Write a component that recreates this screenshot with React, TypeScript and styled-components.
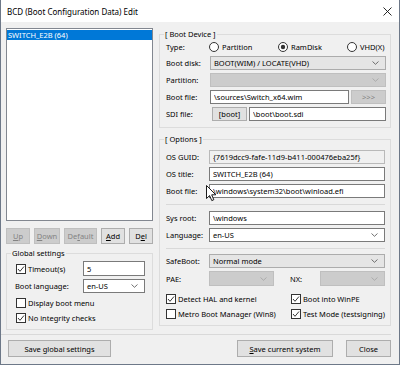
import React from "react"
import styled, { createGlobalStyle, css } from "styled-components"

const GlobalStyle = createGlobalStyle`
  html, body { margin: 0; padding: 0; background: #fff; }
  body {
    font-family: "Noto Sans", "DejaVu Sans", sans-serif;
    font-size: 7.5px;
    color: #000;
  }
  * { box-sizing: border-box; }
`

const Window = styled.div`
  position: relative;
  width: 400px;
  height: 365px;
  background: #f0f0f0;
  border: 1px solid #6d7888;
  border-top: none;
  display: flex;
  flex-direction: column;
  overflow: hidden;
`

const TitleBar = styled.div`
  flex: none;
  height: 22px;
  background: #fff;
  display: flex;
  align-items: center;
  justify-content: space-between;
  padding: 0 7px 0 6px;
`

const Title = styled.span`
  font-size: 8px;
`

const Main = styled.div`
  flex: none;
  height: 312px;
  display: flex;
  gap: 6px;
  padding: 6px 8px 0 5px;
`

const LeftCol = styled.div`
  width: 147px;
  display: flex;
  flex-direction: column;
`

const RightCol = styled.div`
  width: 232px;
  display: flex;
  flex-direction: column;
  padding-top: 1px;
`

const ListBox = styled.div`
  height: 193px;
  background: #fff;
  border: 1px solid #828790;
  padding: 1px 0 0 0;
`

const ListItem = styled.div<{ $selected?: boolean }>`
  height: 10px;
  line-height: 10px;
  padding-left: 1px;
  ${p => p.$selected && css`
    background: #0078d7;
    color: #fff;
  `}
`

const ButtonRow = styled.div`
  display: flex;
  gap: 4px;
  margin-top: 7px;
`

const Button = styled.button<{ $w: number; $h?: number }>`
  width: ${p => p.$w}px;
  height: ${p => p.$h ?? 16}px;
  margin: 0;
  padding: 0;
  font: inherit;
  color: #000;
  background: #e1e1e1;
  border: 1px solid #adadad;
  display: flex;
  align-items: center;
  justify-content: center;
  &:disabled {
    background: #cccccc;
    border-color: #bfbfbf;
    color: #838383;
  }
`

const Key = styled.u`
  text-decoration-thickness: 1px;
  text-underline-offset: 1px;
`

const Group = styled.fieldset<{ $mt?: number }>`
  margin: ${p => p.$mt ?? 0}px 0 0 0;
  padding: 0;
  border: 1px solid #dcdcdc;
  min-width: 0;
`

const Legend = styled.legend`
  margin-left: 4px;
  padding: 0 1px;
  height: 10px;
  line-height: 10px;
`

const GroupBody = styled.div<{ $pad: string }>`
  padding: ${p => p.$pad};
  display: flex;
  flex-direction: column;
  gap: 3px;
`

const Row = styled.div<{ $h?: number; $mt?: number }>`
  height: ${p => p.$h ?? 14}px;
  margin-top: ${p => p.$mt ?? 0}px;
  display: flex;
  align-items: center;
`

const Label = styled.span<{ $w: number }>`
  flex: none;
  width: ${p => p.$w}px;
  white-space: nowrap;
`

const Field = styled.input<{ $gray?: boolean }>`
  flex: 1;
  min-width: 0;
  height: 100%;
  margin: 0;
  padding: 0 3px;
  font: inherit;
  color: #000;
  background: ${p => (p.$gray ? "#f0f0f0" : "#fff")};
  border: 1px solid ${p => (p.$gray ? "#b9b9b9" : "#7a7a7a")};
  outline: none;
`

type Variant = "combo" | "edit" | "disabled"

const SelectBox = styled.div<{ $variant: Variant; $w?: number }>`
  ${p => (p.$w ? css`width: ${p.$w}px; flex: none;` : css`flex: 1;`)}
  height: 100%;
  display: flex;
  align-items: center;
  justify-content: space-between;
  padding: 0 6px 0 3px;
  white-space: nowrap;
  ${p => p.$variant === "combo" && css`
    background: #e5e5e5;
    border: 1px solid #acacac;
  `}
  ${p => p.$variant === "edit" && css`
    background: #fff;
    border: 1px solid #7a7a7a;
  `}
  ${p => p.$variant === "disabled" && css`
    background: #cccccc;
    border: 1px solid #bfbfbf;
    color: #838383;
  `}
`

const Chevron = ({ light }: { light?: boolean }) => (
  <svg width="7" height="4" viewBox="0 0 7 4">
    <polyline points="0.5,0.5 3.5,3.3 6.5,0.5" fill="none" stroke={light ? "#a8a8a8" : "#606060"} strokeWidth="0.9" />
  </svg>
)

function Select({ value, variant, w }: { value?: string; variant: Variant; w?: number }) {
  return (
    <SelectBox $variant={variant} $w={w}>
      <span>{value}</span>
      <Chevron light={variant === "disabled"} />
    </SelectBox>
  )
}

const CheckWrap = styled.label<{ $w?: number }>`
  display: flex;
  align-items: center;
  gap: 2px;
  white-space: nowrap;
  ${p => p.$w && css`width: ${p.$w}px; flex: none;`}
`

function Check({ checked, children, w }: { checked?: boolean; children: React.ReactNode; w?: number }) {
  return (
    <CheckWrap $w={w}>
      <svg width="10" height="10" viewBox="0 0 10 10">
        <rect x="0.5" y="0.5" width="9" height="9" fill="#fff" stroke="#333" />
        {checked && <polyline points="2,5 4,7.3 8,2.5" fill="none" stroke="#222" strokeWidth="0.9" />}
      </svg>
      <span>{children}</span>
    </CheckWrap>
  )
}

const RadioWrap = styled.label`
  width: 69px;
  flex: none;
  display: flex;
  align-items: center;
  gap: 3px;
`

function Radio({ checked, children }: { checked?: boolean; children: React.ReactNode }) {
  return (
    <RadioWrap>
      <svg width="10" height="10" viewBox="0 0 10 10">
        <circle cx="5" cy="5" r="4.5" fill="#fff" stroke="#333" />
        {checked && <circle cx="5" cy="5" r="2.2" fill="#333" />}
      </svg>
      <span>{children}</span>
    </RadioWrap>
  )
}

const Divider = styled.div<{ $mt: number; $mb: number }>`
  height: 1px;
  background: #d9d9d9;
  margin: ${p => p.$mt}px 0 ${p => p.$mb}px 0;
`

const FooterLine = styled.div`
  height: 1px;
  background: #d9d9d9;
  margin-right: 8px;
`

const Footer = styled.div`
  display: flex;
  align-items: flex-start;
  padding: 5px 8px 0 7px;
`

const Spacer = styled.div`
  flex: 1;
`

const Cursor = styled.svg`
  position: absolute;
  left: 205px;
  top: 185px;
`

export default function App() {
  return (
    <>
      <GlobalStyle />
      <Window>
        <TitleBar>
          <Title>BCD (Boot Configuration Data) Edit</Title>
          <svg width="9" height="9" viewBox="0 0 9 9">
            <path d="M0.5 0.5 L8.5 8.5 M8.5 0.5 L0.5 8.5" stroke="#111" strokeWidth="0.9" />
          </svg>
        </TitleBar>

        <Main>
          <LeftCol>
            <ListBox>
              <ListItem $selected>SWITCH_E2B (64)</ListItem>
            </ListBox>
            <ButtonRow>
              <Button $w={24} disabled><Key>U</Key>p</Button>
              <Button $w={26} disabled><Key>D</Key>own</Button>
              <Button $w={33} disabled>De<Key>f</Key>ault</Button>
              <Button $w={24}><Key>A</Key>dd</Button>
              <Button $w={24}>D<Key>e</Key>l</Button>
            </ButtonRow>
            <Group $mt={4}>
              <Legend>Global settings</Legend>
              <GroupBody $pad="3px 7px 5px 9px">
                <Row $h={15}>
                  <Check checked w={67}>Timeout(s)</Check>
                  <Field defaultValue="5" readOnly />
                </Row>
                <Row>
                  <Label $w={67} style={{ marginLeft: -1, width: 68 }}>Boot language:</Label>
                  <Select value="en-US" variant="edit" />
                </Row>
                <Row $h={12} $mt={1}>
                  <Check>Display boot menu</Check>
                </Row>
                <Row $h={12}>
                  <Check checked>No integrity checks</Check>
                </Row>
              </GroupBody>
            </Group>
          </LeftCol>

          <RightCol>
            <Group>
              <Legend>[ Boot Device ]</Legend>
              <GroupBody $pad="2px 4px 6px 6px">
                <Row $h={12}>
                  <Label $w={43}>Type:</Label>
                  <Radio>Partition</Radio>
                  <Radio checked>RamDisk</Radio>
                  <Radio>VHD(X)</Radio>
                </Row>
                <Row>
                  <Label $w={44}>Boot disk:</Label>
                  <Select value="BOOT(WIM) / LOCATE(VHD)" variant="combo" />
                </Row>
                <Row>
                  <Label $w={44}>Partition:</Label>
                  <Select variant="disabled" />
                </Row>
                <Row>
                  <Label $w={44}>Boot file:</Label>
                  <Field defaultValue="\sources\Switch_x64.wim" readOnly />
                  <Button $w={35} $h={14} disabled style={{ marginLeft: 2 }}>&gt;&gt;&gt;</Button>
                </Row>
                <Row>
                  <Label $w={46}>SDI file:</Label>
                  <Button $w={35} $h={14}>[boot]</Button>
                  <Field defaultValue="\boot\boot.sdi" readOnly style={{ marginLeft: 2 }} />
                </Row>
              </GroupBody>
            </Group>

            <Group $mt={6}>
              <Legend>[ Options ]</Legend>
              <GroupBody $pad="6px 5px 5px 6px">
                <Row>
                  <Label $w={43}>OS GUID:</Label>
                  <Field $gray defaultValue="{7619dcc9-fafe-11d9-b411-000476eba25f}" readOnly />
                </Row>
                <Row>
                  <Label $w={43}>OS title:</Label>
                  <Field defaultValue="SWITCH_E2B (64)" readOnly />
                </Row>
                <Row>
                  <Label $w={43}>Boot file:</Label>
                  <Field defaultValue="\windows\system32\boot\winload.efi" readOnly />
                </Row>
                <Divider $mt={3} $mb={3} />
                <Row>
                  <Label $w={43}>Sys root:</Label>
                  <Field defaultValue="\windows" readOnly />
                </Row>
                <Row>
                  <Label $w={43}>Language:</Label>
                  <Select value="en-US" variant="edit" />
                </Row>
                <Divider $mt={3} $mb={2} />
                <Row>
                  <Label $w={43}>SafeBoot:</Label>
                  <Select value="Normal mode" variant="combo" />
                </Row>
                <Row $h={15}>
                  <Label $w={43}>PAE:</Label>
                  <Select variant="disabled" w={65} />
                  <Label $w={30} style={{ marginLeft: 16 }}>NX:</Label>
                  <Select variant="disabled" />
                </Row>
                <Row $h={12} $mt={4}>
                  <Check checked w={125}>Detect HAL and kernel</Check>
                  <Check checked>Boot into WinPE</Check>
                </Row>
                <Row $h={12}>
                  <Check w={125}>Metro Boot Manager (Win8)</Check>
                  <Check checked>Test Mode (testsigning)</Check>
                </Row>
              </GroupBody>
            </Group>
          </RightCol>
        </Main>

        <FooterLine />
        <Footer>
          <Button $w={103} $h={17}>Save global settings</Button>
          <Spacer />
          <Button $w={96} $h={17}><Key>S</Key>ave current system</Button>
          <Button $w={45} $h={17} style={{ marginLeft: 13 }}>Close</Button>
        </Footer>

        <Cursor width="11" height="17" viewBox="0 0 11 17">
          <path d="M0.5 0.5 L0.5 13.5 L3.6 10.6 L5.8 15.6 L7.8 14.7 L5.7 9.8 L9.8 9.8 Z" fill="#fff" stroke="#000" strokeWidth="0.9" strokeLinejoin="round" />
        </Cursor>
      </Window>
    </>
  )
}
